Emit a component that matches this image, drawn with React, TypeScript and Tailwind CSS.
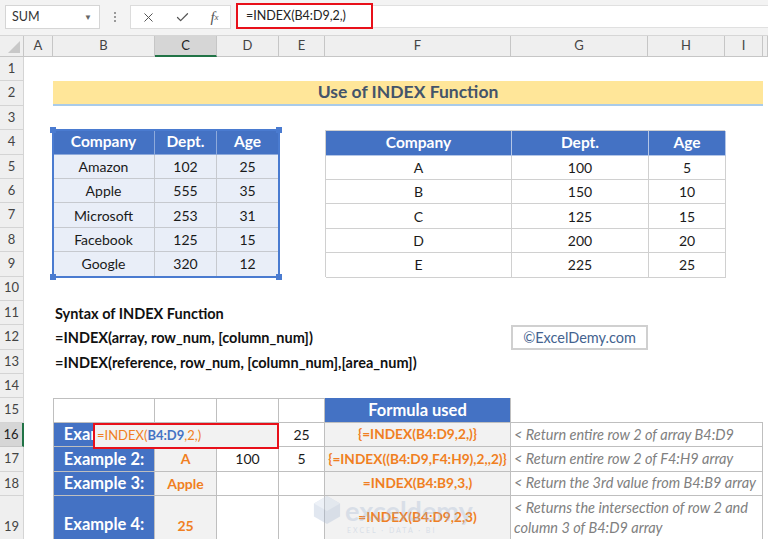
import { X, Check } from "lucide-react";

const ROW = [
  "",
  "row-start-1",
  "row-start-2",
  "row-start-3",
  "row-start-4",
  "row-start-5",
  "row-start-6",
  "row-start-7",
  "row-start-8",
  "row-start-9",
  "row-start-10",
  "row-start-11",
  "row-start-12",
  "row-start-13",
  "row-start-14",
  "row-start-15",
  "row-start-16",
  "row-start-17",
  "row-start-18",
  "row-start-19",
  "row-start-20",
];

const COLUMNS = ["A", "B", "C", "D", "E", "F", "G", "H", "I", ""];

const leftRows = [
  ["Amazon", "102", "25"],
  ["Apple", "555", "35"],
  ["Microsoft", "253", "31"],
  ["Facebook", "125", "15"],
  ["Google", "320", "12"],
];

const rightRows = [
  ["A", "100", "5"],
  ["B", "150", "10"],
  ["C", "125", "15"],
  ["D", "200", "20"],
  ["E", "225", "25"],
];

function FormulaBar() {
  return (
    <div className="flex h-[36px] items-start bg-[#f3f3f3] pt-[5px] border-b border-[#d6d6d6]">
      <div className="ml-[5px] flex h-[24px] w-[95px] items-center justify-between border border-[#d5d5d5] bg-white pl-[6px] pr-[7px] text-[12.5px] text-[#333]">
        <span>SUM</span>
        <span className="text-[8px] text-[#666]">▼</span>
      </div>
      <div className="flex h-[24px] w-[30px] flex-col items-center justify-center gap-[2px]">
        <span className="h-[2px] w-[2px] bg-[#999]" />
        <span className="h-[2px] w-[2px] bg-[#999]" />
        <span className="h-[2px] w-[2px] bg-[#999]" />
      </div>
      <div className="flex h-[24px] w-[101px] items-center border border-[#dcdcdc] bg-white text-[#555]">
        <div className="flex w-[34px] justify-center">
          <X size={15} strokeWidth={1.6} />
        </div>
        <div className="flex w-[34px] justify-center">
          <Check size={15} strokeWidth={2} />
        </div>
        <div className="flex w-[31px] justify-center font-['Liberation_Serif',serif] text-[15px] italic">
          f<span className="mt-[5px] text-[9px]">x</span>
        </div>
      </div>
      <div className="ml-[5px] -mt-[2px] flex h-[26px] w-[137px] items-center border-2 border-[#e8101a] bg-white pl-[8px] text-[12.5px] text-[#222]">
        =INDEX(B4:D9,2,)
      </div>
      <div className="h-[23px] flex-1 border-y border-[#e0e0e0] bg-white" />
    </div>
  );
}

function LeftTable() {
  return (
    <div className="relative col-start-3 col-span-3 row-start-5 row-span-6 grid grid-cols-[102px_62px_62px] grid-rows-[repeat(6,24.4px)]">
      {["Company", "Dept.", "Age"].map((h) => (
        <div
          key={h}
          className="flex items-center justify-center border-r border-b border-[#8eaadb] bg-[#4472c4] text-[15.5px] font-bold text-white"
        >
          {h}
        </div>
      ))}
      {leftRows.map((r) =>
        r.map((v, i) => (
          <div
            key={r[0] + i}
            className="flex items-center justify-center border-r border-b border-[#c6c9cf] bg-[#e9eef8] text-[14px] text-[#1a1a1a]"
          >
            {v}
          </div>
        ))
      )}
      <div className="pointer-events-none absolute -inset-[1px] border-2 border-[#4a7bd0]" />
      <div className="absolute -left-[3px] -top-[3px] h-[6px] w-[6px] bg-[#4a7bd0]" />
      <div className="absolute -right-[3px] -top-[3px] h-[6px] w-[6px] bg-[#4a7bd0]" />
      <div className="absolute -bottom-[3px] -left-[3px] h-[6px] w-[6px] bg-[#4a7bd0]" />
      <div className="absolute -bottom-[3px] -right-[3px] h-[6px] w-[6px] bg-[#4a7bd0]" />
    </div>
  );
}

function RightTable() {
  return (
    <div className="col-start-7 col-span-3 row-start-5 row-span-6 grid grid-cols-[186px_137px_77px] grid-rows-[repeat(6,24.4px)] border-l border-t border-[#d0d0d0]">
      {["Company", "Dept.", "Age"].map((h) => (
        <div
          key={h}
          className="flex items-center justify-center border-r border-b border-[#b4c6e7] bg-[#4472c4] text-[15.5px] font-bold text-white"
        >
          {h}
        </div>
      ))}
      {rightRows.map((r) =>
        r.map((v, i) => (
          <div
            key={r[0] + i}
            className="flex items-center justify-center border-r border-b border-[#d0d0d0] bg-white text-[14px] text-[#1a1a1a]"
          >
            {v}
          </div>
        ))
      )}
    </div>
  );
}

function ExampleTable() {
  const blue = "flex justify-center border-l border-r border-b border-[#bfbfbf] bg-[#4472c4] text-[16.5px] font-bold text-white";
  const plain = "flex items-center justify-center border-r border-b border-[#bfbfbf] bg-white text-[14px] text-[#1a1a1a]";
  const gray = "flex justify-center border-r border-b border-[#bfbfbf] bg-[#f2f2f2] text-[14px] font-bold text-[#f07f22]";
  const formula = "flex items-center justify-center whitespace-nowrap border-r border-b border-[#bfbfbf] bg-[#f2f2f2] text-[13.7px] font-bold text-[#f07f22]";
  const note = "flex items-center border-r border-b border-[#bfbfbf] bg-white pl-[3px] text-[14.5px] italic text-[#808080]";
  return (
    <div className="col-start-3 col-span-8 row-start-16 row-span-5 grid grid-cols-[102px_62px_62px_46px_186px_252px] grid-rows-[repeat(4,24.4px)_44px]">
      <div className="border-l border-t border-r border-b border-[#bfbfbf] bg-white" />
      <div className="border-t border-r border-b border-[#bfbfbf] bg-white" />
      <div className="border-t border-r border-b border-[#bfbfbf] bg-white" />
      <div className="border-t border-r border-b border-[#bfbfbf] bg-white" />
      <div className="flex items-center justify-center border-r border-b border-[#bfbfbf] bg-[#4472c4] text-[16.5px] font-bold text-white">
        Formula used
      </div>
      <div className="border-b border-[#bfbfbf]" />

      <div className={blue + " items-center"}>Example 1:</div>
      <div className={gray + " items-center"} />
      <div className={plain} />
      <div className={plain}>25</div>
      <div className={formula}>{"{=INDEX(B4:D9,2,)}"}</div>
      <div className={note}>{"< Return entire row 2 of array B4:D9"}</div>

      <div className={blue + " items-center"}>Example 2:</div>
      <div className={gray + " items-center"}>A</div>
      <div className={plain}>100</div>
      <div className={plain}>5</div>
      <div className={formula}>{"{=INDEX((B4:D9,F4:H9),2,,2)}"}</div>
      <div className={note}>{"< Return entire row 2 of F4:H9 array"}</div>

      <div className={blue + " items-center"}>Example 3:</div>
      <div className={gray + " items-center"}>Apple</div>
      <div className={plain} />
      <div className={plain} />
      <div className={formula}>=INDEX(B4:B9,3,)</div>
      <div className={note}>{"< Return the 3rd value from B4:B9 array"}</div>

      <div className={blue + " items-end pb-[2px]"}>Example 4:</div>
      <div className={gray + " items-end pb-[3px]"}>25</div>
      <div className={plain} />
      <div className={plain} />
      <div className={formula}>=INDEX(B4:D9,2,3)</div>
      <div className={note + " leading-[20px]"}>
        <span>
          {"< Returns the intersection of row 2 and"}
          <br />
          column 3 of B4:D9 array
        </span>
      </div>
    </div>
  );
}

export default function App() {
  return (
    <div className="h-[539px] w-[768px] overflow-hidden bg-white font-['Lato',sans-serif]">
      <FormulaBar />
      <div className="relative grid grid-cols-[24px_29px_102px_62px_62px_46px_186px_137px_77px_38px_1fr] grid-rows-[21px_repeat(18,24.4px)_44px] bg-white">
        {/* corner */}
        <div className="col-start-1 row-start-1 flex items-end justify-end border-r border-b border-[#c6c6c6] bg-[#efefef] p-[3px]">
          <svg width="12" height="12" viewBox="0 0 12 12">
            <polygon points="12,0 12,12 0,12" fill="#c8c8c8" />
          </svg>
        </div>
        {COLUMNS.map((c) =>
          c === "C" ? (
            <div
              key={c}
              className="row-start-1 flex items-center justify-center border-r border-b-2 border-[#c6c6c6] border-b-[#217346] bg-[#d6d6d6] text-[13px] text-[#222]"
            >
              {c}
            </div>
          ) : (
            <div
              key={c || "J"}
              className="row-start-1 flex items-center justify-center border-r border-b border-[#c6c6c6] bg-[#efefef] text-[13px] text-[#444]"
            >
              {c}
            </div>
          )
        )}
        {Array.from({ length: 19 }, (_, i) => i + 1).map((r) => (
          <div
            key={r}
            className={
              "col-start-1 flex justify-center border-b text-[13px] " +
              ROW[r + 1] +
              (r === 16
                ? " items-center border-r-2 border-[#c6c6c6] border-r-[#217346] bg-[#d6d6d6] text-[#222]"
                : r === 19
                ? " items-end border-r border-[#d4d4d4] bg-[#efefef] pb-[3px] text-[#444]"
                : " items-center border-r border-[#d4d4d4] bg-[#efefef] text-[#444]")
            }
          >
            {r}
          </div>
        ))}

        {/* title */}
        <div className="col-start-3 col-span-8 row-start-3 flex items-center justify-center border-b-2 border-[#a9cbe9] bg-[#ffe699] text-[17.5px] font-bold text-[#44546a]">
          Use of INDEX Function
        </div>

        <LeftTable />
        <RightTable />

        {/* syntax */}
        <div className="col-start-3 col-span-6 row-start-12 flex items-center whitespace-nowrap pl-[2px] pt-[1px] text-[14.5px] font-bold text-[#111]">
          Syntax of INDEX Function
        </div>
        <div className="col-start-3 col-span-6 row-start-13 flex items-center whitespace-nowrap pl-[2px] pt-[1px] text-[14.5px] font-bold text-[#111]">
          =INDEX(array, row_num, [column_num])
        </div>
        <div className="col-start-3 col-span-6 row-start-14 flex items-center whitespace-nowrap pl-[2px] pt-[1px] text-[14.5px] font-bold text-[#111]">
          =INDEX(reference, row_num, [column_num],[area_num])
        </div>

        <div className="col-start-8 row-start-13 flex items-center justify-center border-2 border-[#d0d0d0] text-[14.5px] text-[#44638f]">
          ©ExcelDemy.com
        </div>

        <ExampleTable />

        {/* in-cell editor */}
        <div className="absolute left-[93px] top-[387px] flex h-[26px] w-[186px] items-center border-2 border-[#e8101a] bg-[#f2f2f2] pl-[2px] text-[13px] text-[#f07f22]">
          =INDEX(<span className="font-bold text-[#4472c4]">B4:D9</span>,2,)
        </div>

        {/* watermark */}
        <div className="pointer-events-none absolute left-[313px] top-[459px] flex flex-col opacity-30">
          <div className="flex items-center gap-[4px]">
            <svg width="28" height="30" viewBox="0 0 30 32">
              <polygon points="15,1 29,9 29,23 15,31 1,23 1,9" fill="#9fb3d1" />
              <polygon points="15,1 29,9 15,17 1,9" fill="#c4d2e6" />
            </svg>
            <span className="text-[27px] font-bold leading-none text-[#9fb3d1]">exceldemy</span>
          </div>
          <span className="ml-[34px] text-[7px] tracking-[2px] text-[#9fb3d1]">EXCEL · DATA · BI</span>
        </div>
      </div>
    </div>
  );
}
